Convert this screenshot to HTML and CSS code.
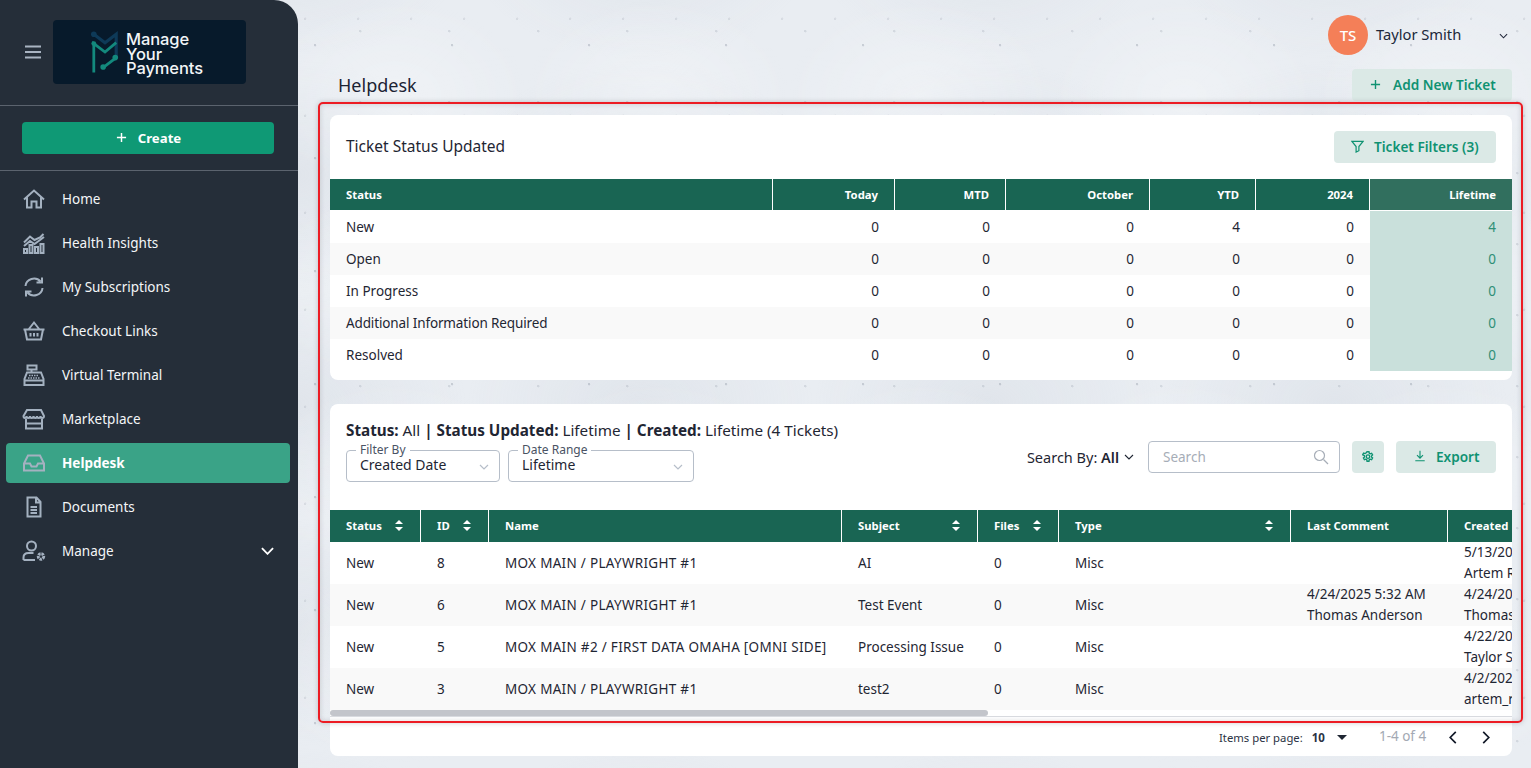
FILE: index.html
```html
<!DOCTYPE html>
<html lang="en">
<head>
<meta charset="utf-8">
<title>Helpdesk</title>
<link rel="stylesheet" href="styles.css">
</head>
<body>
<div class="app">
  <aside class="sidebar">
    <div class="brand">
      <svg class="burger" viewBox="0 0 16 14"><path d="M0 1.500h16M0 7h16M0 12.500h16"/></svg>
      <div class="logo">
        <svg class="logo-mark" viewBox="0 0 30 44">
          <path class="navy" d="M3 3l12 9L27 3v26" />
          <circle class="navy-dot" cx="3" cy="3" r="3"/>
          <path class="teal" d="M3 44V13l12 9L27 12M14 38l13-10"/>
          <circle class="teal-dot" cx="3" cy="13" r="2.600"/>
          <circle class="teal-dot" cx="13" cy="38" r="3"/>
          <circle class="teal-dot" cx="26" cy="28" r="3"/>
        </svg>
        <div class="logo-text">Manage<br>Your<br>Payments</div>
      </div>
    </div>
    <div class="create-wrap">
      <button class="create"><svg viewBox="0 0 12 12"><path d="M6 1v10M1 6h10"/></svg><span>Create</span></button>
    </div>
    <nav class="nav">
      <a class="nav-item"><svg viewBox="0 0 24 24"><path d="M2 12.500 12 3.500l10 9M5 10.500V20.500h4.500v-6h5v6H19V10.500"/></svg>Home</a>
      <a class="nav-item"><svg viewBox="0 0 24 24"><path d="M2 11.500l6-6 4.500 3.500L18 6.500 21.500 3M2 15l6-5 4.500 3 5.500-4 4-3"/><rect x="2" y="18" width="3" height="4"/><rect x="7.500" y="14" width="3" height="8"/><rect x="13" y="16" width="3" height="6"/><rect x="18.500" y="13" width="3" height="9"/></svg>Health Insights</a>
      <a class="nav-item"><svg viewBox="0 0 24 24"><path d="M3.500 11a8.500 8 0 0 1 15-4.500M20.500 13a8.500 8 0 0 1-15 4.500M20 2.500v5h-5.500M4 21.500v-5h5.500"/></svg>My Subscriptions</a>
      <a class="nav-item"><svg viewBox="0 0 24 24"><path d="M1.500 10.500h21M3 10.500 5 20.500h14l2-10M6.500 10.500 12 3.500l5.500 7M8.500 14v3.500M12 14v3.500M15.500 14v3.500"/></svg>Checkout Links</a>
      <a class="nav-item"><svg viewBox="0 0 24 24"><path d="M5.500 2.500h9v4h-9zM9.500 6.500v3M5 9.500h14L21.500 16v6h-19v-6zM2.500 17.500h19"/><path class="dots" d="M7 12.500h10M6 15h12"/></svg>Virtual Terminal</a>
      <a class="nav-item"><svg viewBox="0 0 24 24"><path d="M5 3h14l3 6c0 2.500-3.500 2.500-3.500 0 0 2.500-3.500 2.500-3.500 0 0 2.500-3.500 2.500-3.500 0 0 2.500-3.500 2.500-3.500 0 0 2.500-3.500 2.500-3.500 0 0 2.500-3 2.500-3 0zM4 12v9.500h16V12M4 16.500h16"/></svg>Marketplace</a>
      <a class="nav-item active"><svg viewBox="0 0 24 24"><path d="M6 4.500h12l4 8v7H2v-7zM2 12.500h6l1.500 3h5l1.500-3h6"/></svg>Helpdesk</a>
      <a class="nav-item"><svg viewBox="0 0 24 24"><path d="M5.500 2.500h9L18.500 7v14.500h-13zM14 2.500V7.500h4.500M8.500 12h6.500M8.500 15h6.500M8.500 18h6.500"/></svg>Documents</a>
      <a class="nav-item"><svg viewBox="0 0 24 24"><circle cx="9.500" cy="7" r="4.500"/><path d="M1.500 21v-2.500c0-3 2-4.500 5-4.500h5M1.500 21H13"/><circle class="gear" cx="19" cy="17.500" r="2.700"/></svg>Manage<svg class="nav-caret" viewBox="0 0 14 8"><path d="M1 1l6 6 6-6"/></svg></a>
    </nav>
  </aside>

  <main class="main">
    <header class="topbar">
      <span class="avatar">TS</span>
      <span class="user">Taylor Smith</span>
      <svg class="user-caret" viewBox="0 0 10 6"><path d="M1 1l4 4 4-4"/></svg>
    </header>
    <div class="page-head">
      <h1>Helpdesk</h1>
      <button class="btn add"><svg viewBox="0 0 12 12"><path d="M6 1v10M1 6h10"/></svg>Add New Ticket</button>
    </div>

    <section class="card card-top">
      <div class="card-head">
        <h2>Ticket Status Updated</h2>
        <button class="btn"><svg viewBox="0 0 14 14"><path d="M1 1.500h12L8.500 7v4.500l-3 1.500V7z"/></svg>Ticket Filters (3)</button>
      </div>
      <table class="tbl summary">
        <colgroup><col class="s1"><col class="s2"><col class="s3"><col class="s4"><col class="s5"><col class="s6"><col class="s7"></colgroup>
        <thead><tr><th>Status</th><th class="num">Today</th><th class="num">MTD</th><th class="num">October</th><th class="num">YTD</th><th class="num">2024</th><th class="num life">Lifetime</th></tr></thead>
        <tbody>
          <tr><td>New</td><td class="num">0</td><td class="num">0</td><td class="num">0</td><td class="num">4</td><td class="num">0</td><td class="num life">4</td></tr>
          <tr><td>Open</td><td class="num">0</td><td class="num">0</td><td class="num">0</td><td class="num">0</td><td class="num">0</td><td class="num life">0</td></tr>
          <tr><td>In Progress</td><td class="num">0</td><td class="num">0</td><td class="num">0</td><td class="num">0</td><td class="num">0</td><td class="num life">0</td></tr>
          <tr><td class="tight">Additional Information Required</td><td class="num">0</td><td class="num">0</td><td class="num">0</td><td class="num">0</td><td class="num">0</td><td class="num life">0</td></tr>
          <tr><td>Resolved</td><td class="num">0</td><td class="num">0</td><td class="num">0</td><td class="num">0</td><td class="num">0</td><td class="num life">0</td></tr>
        </tbody>
      </table>
    </section>

    <section class="card card-list">
      <div class="list-tools">
        <div class="list-left">
          <p class="crumbs"><b>Status:</b> All <b>|</b> <b>Status Updated:</b> Lifetime <b>|</b> <b>Created:</b> Lifetime (4 Tickets)</p>
          <div class="selects">
            <label class="select sel-a"><span class="legend">Filter By</span>Created Date<svg viewBox="0 0 10 6"><path d="M1 1l4 4 4-4"/></svg></label>
            <label class="select sel-b"><span class="legend">Date Range</span>Lifetime<svg viewBox="0 0 10 6"><path d="M1 1l4 4 4-4"/></svg></label>
          </div>
        </div>
        <div class="list-right">
          <span class="search-by">Search By: <b>All</b><svg viewBox="0 0 10 6"><path d="M1 1l4 4 4-4"/></svg></span>
          <div class="search"><span>Search</span><svg viewBox="0 0 16 16"><circle cx="6.500" cy="6.500" r="5"/><path d="M10.500 10.500 15 15"/></svg></div>
          <button class="btn icon-btn"><svg viewBox="0 0 16 16"><path d="M6.700 1h2.600l.4 2 1.200.7 1.900-.7 1.300 2.300-1.500 1.300v1.400l1.500 1.300-1.300 2.300-1.900-.7-1.200.7-.4 2H6.700l-.4-2-1.200-.7-1.900.7-1.300-2.300 1.500-1.300V6.300L.900 5l1.300-2.300 1.900.7 1.200-.7z"/><circle cx="8" cy="7.500" r="2.300"/></svg></button>
          <button class="btn export"><svg viewBox="0 0 14 14"><path d="M7 1v8M3.500 6 7 9.500 10.500 6M1.500 12.500h11"/></svg>Export</button>
        </div>
      </div>
      <div class="table-scroll">
        <table class="tbl tickets">
          <colgroup><col class="t1"><col class="t2"><col class="t3"><col class="t4"><col class="t5"><col class="t6"><col class="t7"><col class="t8"></colgroup>
          <thead><tr>
            <th><span class="sortable">Status<i class="sort"></i></span></th>
            <th><span class="sortable">ID<i class="sort"></i></span></th>
            <th>Name</th>
            <th><span class="sortable">Subject<i class="sort"></i></span></th>
            <th><span class="sortable">Files<i class="sort"></i></span></th>
            <th><span class="sortable">Type<i class="sort"></i></span></th>
            <th>Last Comment</th>
            <th>Created</th>
          </tr></thead>
          <tbody>
            <tr><td>New</td><td>8</td><td>MOX MAIN / PLAYWRIGHT #1</td><td>AI</td><td>0</td><td>Misc</td><td></td><td>5/13/2025 9:14 AM<br>Artem R</td></tr>
            <tr><td>New</td><td>6</td><td>MOX MAIN / PLAYWRIGHT #1</td><td>Test Event</td><td>0</td><td>Misc</td><td>4/24/2025 5:32 AM<br>Thomas Anderson</td><td>4/24/2025 5:30 AM<br>Thomas Anderson</td></tr>
            <tr><td>New</td><td>5</td><td>MOX MAIN #2 / FIRST DATA OMAHA [OMNI SIDE]</td><td>Processing Issue</td><td>0</td><td>Misc</td><td></td><td>4/22/2025 8:02 AM<br>Taylor Smith</td></tr>
            <tr><td>New</td><td>3</td><td>MOX MAIN / PLAYWRIGHT #1</td><td>test2</td><td>0</td><td>Misc</td><td></td><td>4/2/2025 3:11 PM<br>artem_r</td></tr>
          </tbody>
        </table>
      </div>
      <div class="scrollbar"><div class="thumb"></div></div>
      <div class="pager">
        <span class="per">Items per page:</span>
        <b class="per-val">10</b>
        <i class="per-caret"></i>
        <span class="range">1-4 of 4</span>
        <svg class="pg pg-prev" viewBox="0 0 8 14"><path d="M7 1 1 7l6 6"/></svg>
        <svg class="pg" viewBox="0 0 8 14"><path d="M1 1l6 6-6 6"/></svg>
      </div>
    </section>
  </main>
</div>
<div class="annotation"></div>
</body>
</html>
```
FILE: styles.css
```css
* { box-sizing: border-box; }
html, body { height: 100%; }
body {
  margin: 0;
  height: 768px;
  overflow: hidden;
  font-family: "Noto Sans", "Open Sans", sans-serif;
  font-size: 14px;
  color: #1f2633;
  background-color: #e9edf2;
  background-image:
    radial-gradient(circle at 30% 40%, rgba(120,130,145,.3) 0 1px, transparent 1.500px),
    radial-gradient(circle at 70% 20%, rgba(120,130,145,.2) 0 1px, transparent 1.500px),
    radial-gradient(circle at 55% 75%, rgba(120,130,145,.16) 0 1px, transparent 1.500px),
    radial-gradient(closest-side, rgba(255,255,255,.3), transparent),
    radial-gradient(closest-side, rgba(190,198,210,.2), transparent);
  background-size: 137px 113px, 89px 71px, 53px 97px, 263px 191px, 347px 229px;
  background-position: 0 0, 31px 17px, 11px 43px, 0 0, 120px 60px;
}
button { font: inherit; border: 0; cursor: pointer; }
svg { display: block; fill: none; stroke: currentColor; }

.app { display: flex; height: 768px; }

/* sidebar */
.sidebar {
  flex: 0 0 298px;
  background: #252e39;
  border-top-right-radius: 24px;
  color: #fff;
}
.brand {
  height: 106px;
  padding: 20px 0 0 25px;
  display: flex;
  align-items: flex-start;
  border-bottom: 1px solid #5b636e;
}
.burger { width: 16px; height: 14px; margin: 25px 12px 0 0; color: #a9b4c2; stroke-width: 2; }
.logo {
  width: 193px;
  height: 64px;
  background: #071a2b;
  border-radius: 4px;
  display: flex;
  align-items: center;
  padding-left: 38px;
  gap: 7px;
}
.logo-mark { width: 28px; height: 42px; stroke-width: 3; }
.navy { color: #0e3a58; stroke-width: 3.400; }
.navy-dot { fill: #0e3a58; stroke: none; }
.teal { color: #13897d; }
.teal-dot { fill: #13897d; stroke: none; }
.logo-text { font-family: Inter, sans-serif; font-weight: 500; font-size: 16.500px; line-height: 14.700px; color: #f2f5f7; letter-spacing: -.1px; padding-top: 4px; }

.create-wrap { height: 65px; padding: 16px 24px 0 22px; border-bottom: 1px solid #5b636e; }
.create {
  width: 252px; height: 32px;
  padding: 0 0 1px 1px;
  background: #0f9975;
  border-radius: 4px;
  color: #fff;
  font-weight: 700;
  font-size: 13.200px;
  display: flex; align-items: center; justify-content: center; gap: 11px;
}
.create svg { width: 11px; height: 11px; stroke-width: 1.600; }

.nav { padding: 6px 8px 0 6px; display: flex; flex-direction: column; }
.nav-item {
  height: 44px;
  padding: 0 16px 0 16px;
  border-radius: 4px;
  display: flex; align-items: center; gap: 16px;
  font-size: 13.500px;
  color: #f4f6f8;
}
.nav-item svg { width: 24px; height: 24px; color: #a4b1c0; stroke-width: 2; flex: none; }
.nav-item svg.nav-caret { width: 13px; height: 8px; margin-left: auto; color: #fff; stroke-width: 2; }
.nav-item svg .dots { stroke-width: 1.600; stroke-dasharray: 1.500 1; }
.nav-item svg .gear { stroke-width: 3; stroke-dasharray: 2.400 .8; }
.nav-item.active { height: 40px; margin: 2px 0; background: #3aa387; font-weight: 700; color: #fff; }

/* main */
.main { flex: 1; min-width: 0; padding: 0 19px 0 32px; }
.topbar { height: 69px; display: flex; align-items: flex-start; padding: 15px 0 0 998px; }
.avatar {
  width: 40px; height: 40px; border-radius: 50%;
  background: #f47f58; color: #fff;
  display: flex; align-items: center; justify-content: center;
  font-weight: 500; font-size: 15px;
}
.user { margin: 8px 0 0 8px; font-size: 14.700px; line-height: 22px; color: #20283a; }
.user-caret { width: 9px; height: 6px; margin: 18px 4px 0 auto; color: #20283a; stroke-width: 1.200; }

.page-head { height: 46px; display: flex; justify-content: space-between; align-items: flex-start; padding-left: 8px; }
.page-head h1 { margin: 4px 0 0; font-size: 18px; font-weight: 400; line-height: 24px; color: #1b2333; }

.btn {
  height: 32px;
  padding: 0 16px 2px;
  background: #dbe9e6;
  border-radius: 4px;
  color: #0f9272;
  font-weight: 600;
  font-size: 13.600px;
  display: inline-flex; align-items: center; gap: 10px;
}
.btn svg { width: 13px; height: 13px; stroke-width: 1.300; }
.btn.add { width: 160px; padding: 0 0 2px 18px; gap: 12px; }
.btn.add svg { width: 11px; height: 11px; stroke-width: 1.500; }

.card { background: #fff; border-radius: 8px; }
.card-top { height: 265px; padding-top: 16px; }
.card-head { height: 48px; padding: 0 16px; display: flex; justify-content: space-between; align-items: flex-start; }
.card-head h2 { margin: 3px 0 0; font-size: 15.500px; font-weight: 400; line-height: 24px; }
.card-head .btn { width: 162px; padding-left: 17px; }

.tbl { border-collapse: separate; border-spacing: 0; table-layout: fixed; }
.tbl th {
  background: #196553;
  color: #fff;
  font-size: 11.300px;
  font-weight: 700;
  text-align: left;
  padding: 0 16px;
  border-right: 1px solid #fff;
}
.tbl th:last-child { border-right: 0; }
.tbl td { padding: 0 16px; font-size: 13.500px; line-height: 22px; color: #1f2633; white-space: nowrap; overflow: hidden; }
.tbl tbody tr:nth-child(even) td { background: #f9f9f9; }
.num { text-align: right !important; }
.tight { letter-spacing: -.13px; }

.summary { width: 1182px; }
.summary th { height: 32px; border-bottom: 1px solid #fff; }
.summary td { height: 32px; }
.summary th.life { background: #316f5e; }
.summary td.life { background: #c9e0db !important; color: #2f8f76; }
.s1 { width: 443px; } .s2 { width: 122px; } .s3 { width: 111px; } .s4 { width: 144px; }
.s5 { width: 106px; } .s6 { width: 114px; } .s7 { width: 142px; }

.card-list { height: 352px; margin-top: 24px; }
.list-tools { height: 106px; padding: 15px 16px 0; display: flex; justify-content: space-between; }
.crumbs { margin: 0; font-size: 15.250px; line-height: 22px; }
.crumbs b { font-weight: 700; }
.selects { display: flex; gap: 8px; margin-top: 9px; }
.select {
  position: relative;
  height: 32px;
  border: 1px solid #b6bec9;
  border-radius: 4px;
  padding: 3px 13px 0;
  font-size: 14px;
  line-height: 22px;
  color: #1f2633;
}
.sel-a { width: 154px; }
.sel-b { width: 186px; }
.select svg { position: absolute; right: 10px; top: 13px; width: 10px; height: 6px; color: #b6bec9; stroke-width: 1.200; }
.legend {
  position: absolute; left: 9px; top: -7px;
  padding: 0 4px;
  background: #fff;
  font-size: 12px; line-height: 12px;
  color: #4a5364;
}
.list-right { display: flex; align-items: flex-start; padding-top: 22px; }
.search-by { display: flex; align-items: center; height: 31px; font-size: 14.500px; white-space: pre; }
.search-by b { font-weight: 600; }
.search-by svg { width: 10px; height: 6px; margin-left: 5px; stroke-width: 1.100; }
.search {
  width: 192px; height: 32px; margin-left: 14px;
  border: 1px solid #b6bec9; border-radius: 4px;
  padding: 0 10px 0 14px;
  display: flex; align-items: center; justify-content: space-between;
  color: #a6adb7; font-size: 13.500px;
}
.search svg { width: 16px; height: 16px; stroke-width: 1.200; }
.icon-btn { width: 32px; padding: 0; justify-content: center; margin-left: 12px; }
.icon-btn svg { width: 12px; height: 12px; stroke-width: 1.800; }
.export { width: 100px; margin-left: 12px; padding: 0 0 2px 18px; gap: 10px; }
.export svg { width: 12px; height: 12px; }

.table-scroll { overflow: hidden; width: 1182px; height: 200px; }
.scrollbar { width: 1182px; height: 7px; border-bottom: 1px solid #d9dbe0; }
.thumb { width: 658px; height: 6px; background: #c3c5cb; border-radius: 3px; }
.tickets { width: 2123px; }
.tickets th { height: 32px; padding-bottom: 2px; }
.tickets td { height: 42px; line-height: 21px; }
.tickets td:nth-child(3) { letter-spacing: .3px; }
.sortable { display: flex; justify-content: space-between; align-items: center; padding-right: 1px; }
.sort { display: block; width: 8px; height: 11px; position: relative; }
.sort::before, .sort::after { content: ""; position: absolute; left: 0; border-left: 4px solid transparent; border-right: 4px solid transparent; }
.sort::before { top: 0; border-bottom: 4.500px solid #fff; }
.sort::after { bottom: 0; border-top: 4.500px solid #fff; }
.t1 { width: 91px; } .t2 { width: 68px; } .t3 { width: 353px; } .t4 { width: 136px; }
.t5 { width: 81px; } .t6 { width: 232px; } .t7 { width: 157px; } .t8 { width: 1005px; }

.pager { height: 39px; display: flex; align-items: center; padding: 2px 0 0 889px; font-size: 11.300px; color: #2b3344; }
.per-val { margin-left: 9px; font-size: 11.500px; }
.per-caret { margin-left: 12px; border-left: 5px solid transparent; border-right: 5px solid transparent; border-top: 5px solid #1f2633; }
.range { margin-left: 32px; color: #a3a9b3; font-size: 13.500px; margin-top: -3px; }
.pg { width: 8px; height: 13px; color: #111827; stroke-width: 1.800; margin-left: 25px; }
.pg-prev { margin-left: 23px; }

/* red review frame laid over the page */
.annotation {
  position: absolute;
  left: 318px; top: 102px;
  width: 1205px; height: 621px;
  border: 2px solid #ec1c24;
  border-radius: 5px;
  box-shadow: 0 0 5px rgba(60,60,70,.25), inset 0 0 5px rgba(60,60,70,.2);
  pointer-events: none;
}
```
